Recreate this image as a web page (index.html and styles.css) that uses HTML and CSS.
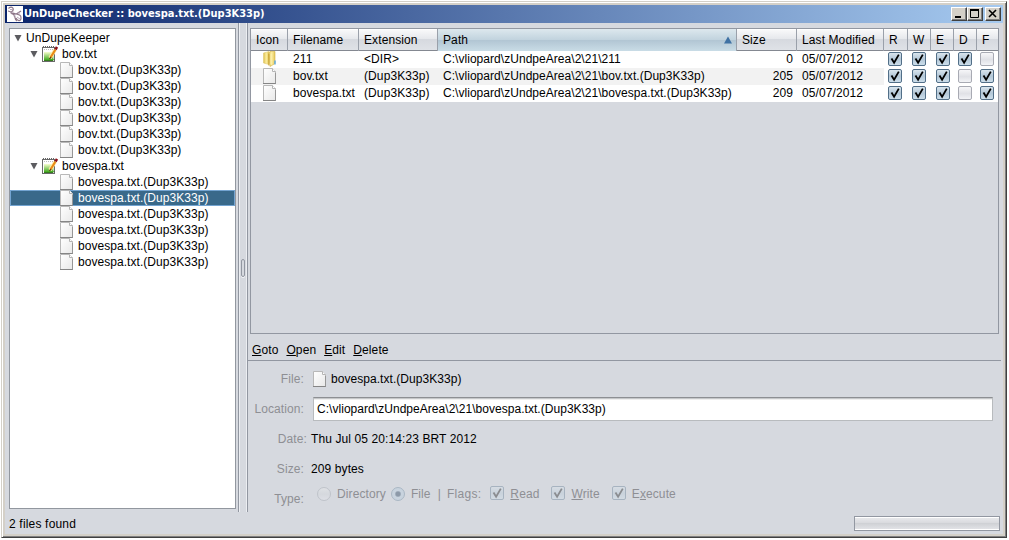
FILE: index.html
```
<!DOCTYPE html>
<html lang="en">
<head>
<meta charset="utf-8">
<title>UnDupeChecker</title>
<link rel="stylesheet" href="styles.css">
</head>
<body>
<svg class="defs" width="0" height="0">
  <defs>
    <linearGradient id="gPage" x1="0" y1="0" x2="1" y2="1"><stop offset="0" stop-color="#fff"/><stop offset="1" stop-color="#e8e8e8"/></linearGradient>
    <linearGradient id="gGreen" x1="0" y1="0" x2="0" y2="1"><stop offset="0" stop-color="#f8ffd0"/><stop offset="1" stop-color="#3fa81c"/></linearGradient>
    <linearGradient id="gOn" x1="0" y1="0" x2="0" y2="1"><stop offset="0" stop-color="#dde8f0"/><stop offset=".5" stop-color="#b3c7d7"/><stop offset="1" stop-color="#cfe0ec"/></linearGradient>
    <linearGradient id="gOff" x1="0" y1="0" x2="0" y2="1"><stop offset="0" stop-color="#f8f8fa"/><stop offset=".55" stop-color="#e0e1e6"/><stop offset="1" stop-color="#f4f5f8"/></linearGradient>
    <linearGradient id="gFold" x1="0" y1="0" x2="1" y2="0"><stop offset="0" stop-color="#dcbd4c"/><stop offset=".5" stop-color="#fcee9f"/><stop offset="1" stop-color="#e3c559"/></linearGradient>
  </defs>
  <symbol id="page" viewBox="-1 0 16 16">
    <path d="M.5.5h9l3 3v12h-12z" fill="url(#gPage)" stroke="#b8b8b8"/>
    <path d="M0 15.500h13" stroke="#858585"/><path d="M12.500 5v10.500" stroke="#979797"/>
    <path d="M9.500 .5v3h3" fill="#fff" stroke="#b4b4b4"/>
  </symbol>
  <symbol id="note" viewBox="0 0 16 16">
    <rect x=".5" y="1.500" width="12" height="14" fill="#fff" stroke="#6a6a6a"/>
    <rect x="2" y="6" width="9.500" height="8" fill="url(#gGreen)"/><path d="M2 14.500h9l1.500-1.500" fill="none" stroke="#357c1d"/>
    <path d="M1 1h11" stroke="#666" stroke-width="2" stroke-dasharray="1 1"/><path d="M2 3.500h9" stroke="#bbb" stroke-dasharray="1 1"/>
    <path d="M8 12l5-8" stroke="#fff0b0" stroke-width="3.600"/><path d="M8.500 11.500l5-8" stroke="#e98b16" stroke-width="2.200"/>
    <path d="M13.500 3.500l1.500-2.500" stroke="#8c1018" stroke-width="2.600"/><path d="M7.500 13l1.500-2" stroke="#5e3a12" stroke-width="1.200"/>
  </symbol>
  <symbol id="folder" viewBox="0 0 16 16">
    <path d="M1.500 2l5.500-1.500v13L1.500 12z" fill="url(#gFold)" stroke="#e0c970" stroke-width=".6"/>
    <path d="M6.500 2.500L8 .5h5v12l-5 3z" fill="url(#gFold)" stroke="#d4b244" stroke-width=".6"/>
    <path d="M6.800 3v11.500" stroke="#c19b2a" stroke-width=".8"/><path d="M9 2.500v11" stroke="#fff5bf" stroke-width=".8"/>
    <path d="M13 9.500v4" stroke="#55a7e8" stroke-width="1.400"/>
  </symbol>
  <symbol id="on" viewBox="0 0 16 16">
    <rect x="1.500" y="1.500" width="13" height="13" rx="1.500" fill="url(#gOn)" stroke="#526f88"/>
    <path d="M4.500 7.500l2.600 4.200L11.800 3.600" fill="none" stroke="#000" stroke-width="1.800"/>
  </symbol>
  <symbol id="off" viewBox="0 0 16 16">
    <rect x="1.500" y="1.500" width="13" height="13" rx="1.500" fill="url(#gOff)" stroke="#a8aab3"/>
  </symbol>
  <symbol id="down" viewBox="0 0 8 8"><path d="M.5 1h7L4 7.500z" fill="#5c5c60"/></symbol>
</svg>

<main class="window">
  <header class="titlebar">
    <svg class="logo" viewBox="0 0 16 16"><rect width="16" height="16" fill="#fff"/><g fill="none" stroke="#8e7788" stroke-width="1.200"><path d="M1.500 2.500C5-.5 8 3 5 5.500S8 10 14 5M1 5c3 0 4 2 6 4s0 5 3 6M6 7c5 2 8 1 8 5s-4 3-5 0"/></g><g fill="none" stroke="#b8a8bc"><path d="M3 3.500h3M6 5.500l-2 2M9 7.500l-2 3M10 11l3 2M11 7l2 0"/></g></svg>
    <h1 class="title">UnDupeChecker :: bovespa.txt.(Dup3K33p)</h1>
    <div class="wbtns">
      <span class="wbtn"><svg viewBox="0 0 14 12"><path d="M3 9h6" stroke="#000" stroke-width="2"/></svg></span>
      <span class="wbtn"><svg viewBox="0 0 14 12"><path d="M2.500 2v7.500h8V2" fill="none" stroke="#000"/><path d="M2 2h9" stroke="#000" stroke-width="2"/></svg></span>
      <span class="wbtn close"><svg viewBox="0 0 14 12"><path d="M3 2l7 7M10 2l-7 7" stroke="#000" stroke-width="1.600"/></svg></span>
    </div>
  </header>

  <div class="body">
    <nav class="tree">
      <div class="node root"><svg class="tw"><use href="#down"/></svg><span>UnDupeKeeper</span></div>
      <div class="node group"><svg class="tw"><use href="#down"/></svg><svg class="ic"><use href="#note"/></svg><span class="bov">bov.txt</span></div>
      <div class="node leaf"><svg class="ic"><use href="#page"/></svg><span class="bov">bov.txt.(Dup3K33p)</span></div>
      <div class="node leaf"><svg class="ic"><use href="#page"/></svg><span class="bov">bov.txt.(Dup3K33p)</span></div>
      <div class="node leaf"><svg class="ic"><use href="#page"/></svg><span class="bov">bov.txt.(Dup3K33p)</span></div>
      <div class="node leaf"><svg class="ic"><use href="#page"/></svg><span class="bov">bov.txt.(Dup3K33p)</span></div>
      <div class="node leaf"><svg class="ic"><use href="#page"/></svg><span class="bov">bov.txt.(Dup3K33p)</span></div>
      <div class="node leaf"><svg class="ic"><use href="#page"/></svg><span class="bov">bov.txt.(Dup3K33p)</span></div>
      <div class="node group"><svg class="tw"><use href="#down"/></svg><svg class="ic"><use href="#note"/></svg><span class="bov">bovespa.txt</span></div>
      <div class="node leaf"><svg class="ic"><use href="#page"/></svg><span class="bov">bovespa.txt.(Dup3K33p)</span></div>
      <div class="node leaf selected"><svg class="ic"><use href="#page"/></svg><span class="bov">bovespa.txt.(Dup3K33p)</span></div>
      <div class="node leaf"><svg class="ic"><use href="#page"/></svg><span class="bov">bovespa.txt.(Dup3K33p)</span></div>
      <div class="node leaf"><svg class="ic"><use href="#page"/></svg><span class="bov">bovespa.txt.(Dup3K33p)</span></div>
      <div class="node leaf"><svg class="ic"><use href="#page"/></svg><span class="bov">bovespa.txt.(Dup3K33p)</span></div>
      <div class="node leaf"><svg class="ic"><use href="#page"/></svg><span class="bov">bovespa.txt.(Dup3K33p)</span></div>
    </nav>
    <div class="splitter"><i class="grip"></i></div>
    <section class="main">
      <div class="table">
        <div class="row head"><span>Icon</span><span>Filename</span><span>Extension</span><span class="sorted">Path<svg class="sort" viewBox="0 0 8 8"><path d="M0 7.500h8L4 .5z" fill="#3f71a3"/></svg></span><span>Size</span><span>Last Modified</span><span>R</span><span>W</span><span>E</span><span>D</span><span>F</span></div>
        <div class="row"><span><svg class="ic"><use href="#folder"/></svg></span><span>211</span><span>&lt;DIR&gt;</span><span class="path">C:\vliopard\zUndpeArea\2\21\211</span><span class="num">0</span><span>05/07/2012</span><b><svg class="ic"><use href="#on"/></svg></b><b><svg class="ic"><use href="#on"/></svg></b><b class="e"><svg class="ic"><use href="#on"/></svg></b><b><svg class="ic"><use href="#on"/></svg></b><b class="f"><svg class="ic"><use href="#off"/></svg></b></div>
        <div class="row alt"><span><svg class="ic"><use href="#page"/></svg></span><span class="bov">bov.txt</span><span>(Dup3K33p)</span><span class="path">C:\vliopard\zUndpeArea\2\21\bov.txt.(Dup3K33p)</span><span class="num">205</span><span>05/07/2012</span><b><svg class="ic"><use href="#on"/></svg></b><b><svg class="ic"><use href="#on"/></svg></b><b class="e"><svg class="ic"><use href="#on"/></svg></b><b><svg class="ic"><use href="#off"/></svg></b><b class="f"><svg class="ic"><use href="#on"/></svg></b></div>
        <div class="row"><span><svg class="ic"><use href="#page"/></svg></span><span class="bov">bovespa.txt</span><span>(Dup3K33p)</span><span class="path">C:\vliopard\zUndpeArea\2\21\bovespa.txt.(Dup3K33p)</span><span class="num">209</span><span>05/07/2012</span><b><svg class="ic"><use href="#on"/></svg></b><b><svg class="ic"><use href="#on"/></svg></b><b class="e"><svg class="ic"><use href="#on"/></svg></b><b><svg class="ic"><use href="#off"/></svg></b><b class="f"><svg class="ic"><use href="#on"/></svg></b></div>
      </div>
      <div class="menu"><span><u>G</u>oto</span><span><u>O</u>pen</span><span><u>E</u>dit</span><span><u>D</u>elete</span></div>
      <div class="form">
        <div class="field"><label>File:</label><svg class="ic fileic"><use href="#page"/></svg><span class="bov">bovespa.txt.(Dup3K33p)</span></div>
        <div class="field"><label>Location:</label><div class="input path">C:\vliopard\zUndpeArea\2\21\bovespa.txt.(Dup3K33p)</div></div>
        <div class="field"><label class="date">Date:</label><span class="val datev">Thu Jul 05 20:14:23 BRT 2012</span></div>
        <div class="field"><label>Size:</label><span class="val">209 bytes</span></div>
        <div class="field type"><label>Type:</label>
          <div class="opts">
            <i class="radio"></i><span class="o1">Directory</span><i class="radio sel"></i><span class="o2">File</span><span class="o3">|</span><span class="o4">Flags:</span>
            <svg class="ic dim"><use href="#on"/></svg><span class="o5"><u>R</u>ead</span>
            <svg class="ic dim"><use href="#on"/></svg><span class="o6"><u>W</u>rite</span>
            <svg class="ic dim"><use href="#on"/></svg><span>E<u>x</u>ecute</span>
          </div>
        </div>
      </div>
    </section>
  </div>
  <footer class="status"><span>2 files found</span><div class="progress"></div></footer>
</main>
</body>
</html>
```
FILE: styles.css
```
* { box-sizing: border-box; }
body { margin: 0; width: 1009px; height: 540px; overflow: hidden; background: #fff; font: 12px/16px "Liberation Sans", Arial, sans-serif; letter-spacing: .1px; color: #000; }
.defs { display: block; height: 0; }
svg { display: block; flex: none; }
span { white-space: nowrap; }
.ic { width: 16px; height: 16px; }
.bov { letter-spacing: .05px; }
.path { letter-spacing: .04px; }

.window { width: 1006px; height: 537px; margin: 1px 0 0 1px; border: 1px solid; border-color: #d4d0c8 #404040 #404040 #d4d0c8; box-shadow: inset 1px 1px #fff, inset -1px -1px #808080; background: #d4d0c8; padding: 3px; display: flex; flex-direction: column; }
.titlebar { height: 18px; flex: none; display: flex; align-items: center; background: linear-gradient(90deg, #0a246a, #a6caf0); padding: 0 2px; }
.logo { width: 16px; height: 16px; }
.title { margin: 0 0 0 1px; flex: 1; color: #fff; font: bold 11px/18px "DejaVu Sans Condensed", "DejaVu Sans", sans-serif; font-stretch: condensed; letter-spacing: 0; white-space: nowrap; }
.wbtns { display: flex; }
.wbtn { width: 16px; height: 14px; background: #d4d0c8; border: 1px solid; border-color: #fff #404040 #404040 #fff; box-shadow: inset -1px -1px #808080; }
.wbtn svg { width: 14px; height: 12px; }
.close { margin-left: 2px; }

.body { flex: 1; display: flex; background: #d6d9df; padding-left: 4px; min-height: 0; }
.tree { width: 227px; margin: 5px 0 3px; border: 1px solid #92979f; background: #fff; flex: none; padding-top: 1px; }
.node { display: flex; height: 16px; align-items: center; }
.tw { width: 8px; height: 8px; margin-right: 4px; }
.root { padding-left: 4px; }
.group { padding-left: 20px; }
.group .ic { margin-right: 4px; }
.leaf { padding-left: 49px; }
.leaf .ic { margin-right: 3px; }
.selected { background: #39698a; color: #fff; border: 1px solid #73a4d1; border-width: 1px 0; box-shadow: inset 1px 0 #73a4d1, inset -1px 0 #73a4d1; }

.splitter { width: 10px; margin-left: 2px; flex: none; border-left: 1px solid #9297a1; border-right: 1px solid #9297a1; box-shadow: inset 1px 0 #eceef2, inset -1px 0 #eceef2; display: flex; align-items: center; justify-content: center; }
.grip { width: 4px; height: 18px; border: 1px solid #9297a1; border-radius: 2px; background: #d6d9df; box-shadow: 0 1px #f4f5f8; }

.main { flex: 1; min-width: 0; }
.table { margin: 5px 4px 0 2px; height: 306px; border: 1px solid #9297a1; }
.row { display: grid; grid-template-columns: 37px 71px 79px 299px 60px 87px 24px 23px 23px 23px 1fr; height: 17px; line-height: 17px; background: #fff; }
.row > span { padding-left: 5px; }
.row > span:first-child { padding-left: 11px; }
.row b { padding-left: 3px; background: #fff; }
.row .e { padding-left: 4px; }
.row .f { padding-left: 2px; }
.row.alt { background: #f2f2f2; }
.row > .num { padding: 0 4px 0 0; text-align: right; }
.row.head { height: 22px; line-height: 22px; background: linear-gradient(#fafafb, #e5e7eb 49%, #d6d9df 50%, #dfe2e7); border-bottom: 1px solid #848891; box-shadow: inset 0 1px #fff; }
.head > span { border-right: 1px solid #9aa0aa; }
.row.head > span:first-child { padding-left: 5px; }
.head > span:last-child { border-right: 0; }
.head > .sorted { display: flex; justify-content: space-between; align-items: center; padding-right: 4px; background: linear-gradient(#dde8ee, #c1d3de 49%, #b1c5d3 50%, #c9dce6); }
.sort { width: 8px; height: 8px; }

.menu { height: 26px; margin: 1px 2px 0 0; border-bottom: 1px solid #9297a1; display: flex; gap: 8px; padding: 7px 0 0 4px; }
.form { padding-top: 3px; }
.field { display: flex; height: 30px; align-items: center; }
.field label { width: 56px; text-align: right; color: #8e8f94; flex: none; }
.field .date { width: 59px; }
.fileic { margin: 0 3px 0 8px; }
.input { margin-left: 9px; width: 680px; height: 24px; line-height: 23px; padding-left: 3px; background: #fff; border: 1px solid #b8bbbe; border-top-color: #8d8f93; box-shadow: inset 0 1px #c5c7c9, inset 0 2px #eee; white-space: nowrap; }
.val { margin-left: 7px; }
.datev { margin-left: 4px; }
.opts { display: flex; align-items: center; color: #8e8f94; margin: -10px 0 0 13px; }
.radio { width: 14px; height: 14px; border-radius: 50%; border: 1px solid #bfc3ca; background: linear-gradient(#dfe1e5, #d5d8dd 50%, #dddfe5); }
.sel { border-color: #a9b7c4; background: radial-gradient(circle, #8c99a8 0 2px, #c8d3de 3.500px); }
.dim { opacity: .35; margin-top: -2px; }
.o1 { margin: 0 5px 0 6px; }
.o2 { margin-left: 6px; }
.o3 { margin: 0 6px 0 7px; }
.o4 { margin-right: 8px; letter-spacing: .3px; }
.o5, .o6 { margin-right: 11px; }
.dim + span { margin-left: 5px; }

.status { height: 22px; flex: none; background: #d6d9df; display: flex; justify-content: space-between; align-items: flex-start; padding: 4px 3px 0 4px; }
.status span { letter-spacing: .18px; }
.progress { width: 146px; height: 15px; border: 1px solid #9297a1; background: linear-gradient(#fff 0 1px, #e7e8eb 1px, #d9dade 45%, #cfd1d5 50%, #e1e2e6 12px, #fff 12px); }
```
